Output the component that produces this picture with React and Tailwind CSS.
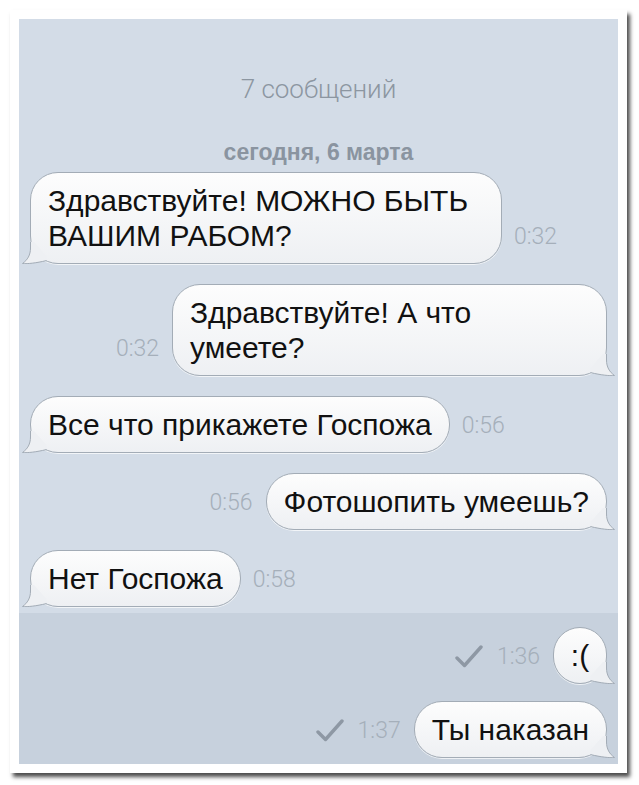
import React from "react";

const FILL = "#eef0f3";
const EDGE = "#a3acb6";

// little speech tail, drawn over the bubble's bottom corner
const Tail = ({ side }) => (
  <svg
    className={`absolute bottom-[-1px] ${side === "left" ? "left-[-9px]" : "right-[-9px]"}`}
    width="26"
    height="22"
    viewBox="0 0 26 22"
  >
    <g transform={side === "left" ? undefined : "translate(26,0) scale(-1,1)"}>
      <path
        d="M8.5 0 L8.5 6 C8.5 13 5.5 18 0.5 21.5 C6 22 14 21 24.5 18.6 L24.5 14 L12 0 Z"
        fill={FILL}
      />
      <path
        d="M8.5 0 L8.5 6 C8.5 13 5.5 18 0.5 21.5 C6 22 14 21 24.5 18.6"
        fill="none"
        stroke={EDGE}
        strokeWidth="1"
      />
    </g>
  </svg>
);

const Bubble = ({ side, className = "", children }) => (
  <div
    className={`relative rounded-[28px] border border-[#a3acb6] bg-gradient-to-b from-[#fdfdfd] to-[#eef0f3] px-[17px] py-[10px] text-[30px] leading-[35px] text-[#111] shadow-[0_1px_0_rgba(255,255,255,0.7)] ${className}`}
  >
    {children}
    <Tail side={side} />
  </div>
);

const Time = ({ children }) => (
  <span className="mb-[14px] font-['Roboto','Liberation_Sans',sans-serif] text-[23px] font-light leading-[26px] text-[#a5afba]">
    {children}
  </span>
);

const Check = () => (
  <svg width="30" height="24" viewBox="0 0 30 24" className="mb-[15px]">
    <path
      d="M3 13 L10.5 20.5 L27 2"
      fill="none"
      stroke="#8e98a4"
      strokeWidth="3.4"
      strokeLinecap="round"
      strokeLinejoin="round"
    />
  </svg>
);

const Incoming = ({ time, className, children }) => (
  <div className="flex items-end gap-[12px] pl-[11px]">
    <Bubble side="left" className={className}>
      {children}
    </Bubble>
    <Time>{time}</Time>
  </div>
);

const Outgoing = ({ time, read, className, children }) => (
  <div className="flex items-end justify-end gap-[13px] pr-[11px]">
    {read && <Check />}
    <Time>{time}</Time>
    <Bubble side="right" className={className}>
      {children}
    </Bubble>
  </div>
);

export default function App() {
  return (
    <div className="h-[785px] w-[639px] bg-white pl-[10px] pt-[10px] font-['Liberation_Sans',Arial,sans-serif]">
      <div className="flex h-[763px] w-[617px] flex-col bg-white p-[9px] shadow-[3px_4px_4px_rgba(0,0,0,0.7)]">
        {/* history part */}
        <div className="flex h-[594px] flex-col bg-[#d3dce7] pt-[55px]">
          <div className="text-center font-['Roboto','Liberation_Sans',sans-serif] text-[26px] font-light leading-[30px] text-[#8c96a1]">
            7 сообщений
          </div>
          <div className="mt-[34px] text-center text-[23px] font-bold leading-[28px] text-[#8a94a0]">
            сегодня, 6 марта
          </div>

          <div className="mt-[6px] flex flex-col gap-[20px]">
            <Incoming time="0:32" className="w-[472px]">
              Здравствуйте! МОЖНО БЫТЬ
              <br />
              ВАШИМ РАБОМ?
            </Incoming>
            <Outgoing time="0:32" className="w-[435px]">
              Здравствуйте! А что
              <br />
              умеете?
            </Outgoing>
            <Incoming time="0:56">Все что прикажете Госпожа</Incoming>
            <Outgoing time="0:56">Фотошопить умеешь?</Outgoing>
            <Incoming time="0:58">Нет Госпожа</Incoming>
          </div>
        </div>

        {/* new messages */}
        <div className="flex flex-1 flex-col gap-[17px] bg-[#c7d1dd] pt-[14px]">
          <Outgoing time="1:36" read className="w-[54px] !px-0 text-center">
            :(
          </Outgoing>
          <Outgoing time="1:37" read>
            Ты наказан
          </Outgoing>
        </div>
      </div>
    </div>
  );
}
